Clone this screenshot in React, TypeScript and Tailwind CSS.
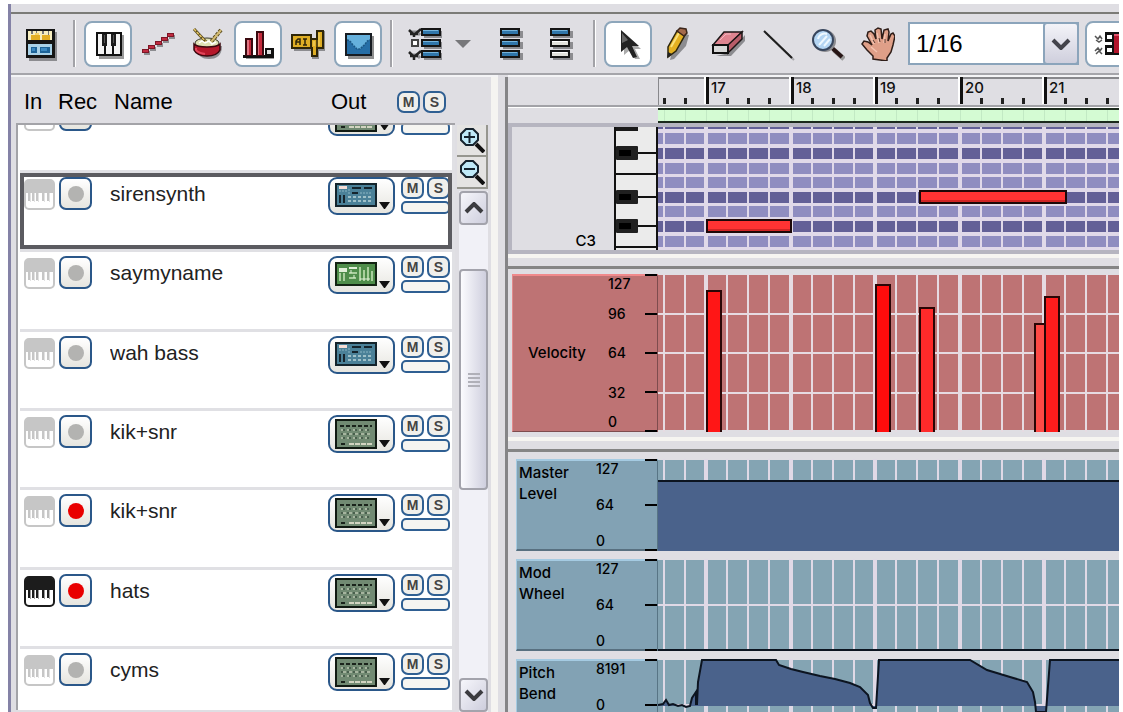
import { useEffect, useRef, useState } from 'react'
import type { ReactNode } from 'react'

type Device = 'synth' | 'sampler' | 'mixer'

interface Track {
  id: number
  name: string
  device: Device
  input?: boolean
  armed?: boolean
  scrolledOut?: boolean
}

interface Note {
  x: number
  y: number
  width: number
}

interface VelocityBar {
  x: number
  top: number
  width: number
  color: string
}

const tracks: Track[] = [
  { id: 0, name: '', device: 'mixer', scrolledOut: true },
  { id: 1, name: 'sirensynth', device: 'synth' },
  { id: 2, name: 'saymyname', device: 'sampler' },
  { id: 3, name: 'wah bass', device: 'synth' },
  { id: 4, name: 'kik+snr', device: 'mixer' },
  { id: 5, name: 'kik+snr', device: 'mixer', armed: true },
  { id: 6, name: 'hats', device: 'mixer', input: true, armed: true },
  { id: 7, name: 'cyms', device: 'mixer' },
]

const notes: Note[] = [
  { x: 49, y: 93, width: 84 },
  { x: 262, y: 64, width: 146 },
]

const velocities: VelocityBar[] = [
  { x: 49, top: 17, width: 14, color: '#ff1616' },
  { x: 218, top: 11, width: 14, color: '#ff0c0c' },
  { x: 262, top: 34, width: 14, color: '#ff2a2a' },
  { x: 377, top: 50, width: 11, color: '#ff4a46' },
  { x: 387, top: 23, width: 14, color: '#ff1c1c' },
]

// one entry per beat, every fourth one starts a bar
const BAR_WIDTH = 84.5
const FIRST_BAR = 17
const beats = Array.from({ length: 160 }, (_, i) => {
  const k = i - 2
  return { x: Math.round(48 + (k * BAR_WIDTH) / 4), bar: k % 4 === 0 ? FIRST_BAR + k / 4 : null }
})

const BeatLines = ({ color }: { color: string }) => (
  <>
    {beats.map((b) => (
      <rect key={b.x} x={b.bar ? b.x - 2 : b.x - 1} y="0" width={b.bar ? 4 : 2} height="100%" fill={color} />
    ))}
  </>
)

/* ---------- Toolbar icons ---------- */

const Icon = ({ children }: { children: ReactNode }) => (
  <svg className="h-[34px] w-[34px]" viewBox="0 0 34 34" fill="none" aria-hidden="true">
    {children}
  </svg>
)

const RackIcon = () => (
  <Icon>
    <path d="M5 5h28v29H5z" fill="#8c8c90" />
    <path d="M2 2h29v29H2z" fill="#151515" />
    <path d="M4 4h24v9H4z" fill="#f7eec0" />
    <path d="M7 4h2v3H7zM12 4h1v4h-1zM18 4h2v3h-2zM24 4h1v4h-1z" fill="#777" />
    <path d="M7 8h9v5H7zM18 8h8v5h-8z" fill="#e3ae25" />
    <path d="M11 6h4v2h-4z" fill="#f7d36a" />
    <path d="M4 17h24v11H4z" fill="#a9d2e8" />
    <path d="M7 20h6v6H7zM16 20h10v6H16z" fill="#1d6499" />
    <path d="M8 21h3v3H8zM17 21h6v3h-6z" fill="#3c8ac2" />
  </Icon>
)

const KeysIcon = () => (
  <Icon>
    <path d="M8 8h25v24H8z" fill="#9a9a9a" />
    <path d="M5 5h26v24H5z" fill="#111" />
    <path d="M7 7h6v20H7zM15 7h6v20h-6zM23 7h6v20h-6z" fill="#f4f4f4" />
    <path d="M11 7h5v12h-5zM20 7h5v12h-5z" fill="#1a1a1a" />
    <path d="M13 8h1v8h-1zM22 8h1v8h-1z" fill="#555" />
  </Icon>
)

const RexIcon = () => (
  <Icon>
    <path d="M3 24h6v4H3zM9 20h6v4H9zM16 16h6v4h-6zM22 12h6v4h-6zM28 8h6v4h-6z" fill="#8c8c90" />
    <path d="M1 22h7v4H1zM7 18h7v4H7zM14 14h7v4h-7zM20 10h7v4h-7zM26 6h7v4h-7z" fill="#7d1626" />
    <path d="M2 23h5v2H2zM8 19h5v2H8zM15 15h5v2h-5zM21 11h5v2h-5zM27 7h5v2h-5z" fill="#c02a40" />
  </Icon>
)

const DrumIcon = () => (
  <Icon>
    <path d="M6 20c0 9 5 12 12 12s13-3 13-13z" fill="#8c8c90" />
    <ellipse cx="16" cy="16" rx="12" ry="5" fill="#dfe0b4" stroke="#3a3a2a" strokeWidth="1" />
    <path d="M3 17v6c2 4 7 6 13 6s11-2 13-6v-6c-4 4-22 4-26 0z" fill="#b5172a" stroke="#3a080e" strokeWidth="1.5" />
    <path d="M5 21v2c2 3 5 3 9 4" stroke="#e0455a" strokeWidth="2" />
    <path d="M3 2l12 13" stroke="#54471b" strokeWidth="3" />
    <path d="M3 2l12 13" stroke="#e4c564" strokeWidth="1.5" strokeDasharray="3 1" />
    <path d="M30 3L20 15" stroke="#54471b" strokeWidth="4" strokeDasharray="3 1" />
    <path d="M30 3L20 15" stroke="#d2ba70" strokeWidth="2" />
    <path d="M8 16l3-2 3 2 4-2 3 3 4-2" stroke="#fff" strokeWidth="1.5" />
  </Icon>
)

const BarsIcon = () => (
  <Icon>
    <path d="M5 30h28v2H5z" fill="#999" />
    <path d="M2 28h31v3H2z" fill="#111" />
    <path d="M4 11h8v18H4zM15 4h8v25h-8z" fill="#3b0a10" />
    <path d="M6 13h4v15H6zM17 6h4v22h-4z" fill="#c42a3c" />
    <path d="M6 13h2v15H6zM17 6h1v22h-1z" fill="#e07482" />
    <path d="M24 21h9v8h-9z" fill="#111" />
    <path d="M26 23h4v4h-4z" fill="#ddd" />
  </Icon>
)

const AutomationIcon = () => (
  <Icon>
    <path d="M3 11h19v13H3zM29 4h5v20h-6v8h-7V14h8z" fill="#8c8c90" />
    <path d="M1 8h19v13H1z" fill="#dfae25" stroke="#2f2608" strokeWidth="2" />
    <path d="M20 12h6V4h6v17h-6v8h-5v-8h-1z" fill="#dfae25" stroke="#2f2608" strokeWidth="2" />
    <path d="M26 4v18" stroke="#2f2608" strokeWidth="1.500" />
    <path d="M5 18v-4l2-2h2v6M5 15h4M12 12h4M14 12v6M12 18h4" stroke="#2f2608" strokeWidth="1.500" />
    <path d="M28 6v13M23 14v5" stroke="#f7dc77" />
  </Icon>
)

const EnvelopeIcon = () => (
  <Icon>
    <path d="M7 9h26v23H7z" fill="#8f8f8f" />
    <path d="M4 6h27v23H4z" fill="#171c22" />
    <path d="M6 8h23v19H6z" fill="#266ea6" />
    <path d="M6 8h23v5c-4 0-4 5-7 6l-3 3h-3l-3-3c-2-1-3-6-7-6z" fill="#65b0dc" />
    <path d="M6 13c4 0 5 5 7 6l3 3h3l3-3c3-1 3-6 7-6" stroke="#1b5784" strokeWidth="1.500" strokeDasharray="2 1" />
  </Icon>
)

const SlotBar = ({ x, y, width, empty }: { x: number; y: number; width: number; empty?: boolean }) => (
  <g>
    <rect x={x + 3} y={y + 3} width={width} height="7" fill="#8c8c90" />
    <rect x={x + 1} y={y + 1} width={width - 2} height="6" fill={empty ? '#e2e2dc' : '#3076aa'} stroke="#151515" strokeWidth="2" />
    <rect x={x + 2} y={y + 2} width={width - 5} height="1" fill={empty ? '#fff' : '#75b4dc'} />
  </g>
)

const ControllerListIcon = () => (
  <Icon>
    <path d="M3 5h6l3 3M3 28h6l3 3" stroke="#8c8c90" strokeWidth="3" />
    <path d="M1 3l5 5 7-6M2 7h8M6 8v2M1 25l5 5 7-6M2 29h8M6 30v3" stroke="#222" strokeWidth="2.500" />
    <path d="M4 13h6v6H4z" fill="#fff" stroke="#444" strokeWidth="2" />
    <SlotBar x={13} y={1} width={20} />
    <SlotBar x={13} y={12} width={20} />
    <SlotBar x={13} y={23} width={20} />
  </Icon>
)

const SlotsIcon = ({ empty }: { empty?: boolean }) => (
  <Icon>
    <SlotBar x={6} y={1} width={20} />
    <SlotBar x={6} y={12} width={20} empty={empty} />
    <SlotBar x={6} y={23} width={20} empty={empty} />
  </Icon>
)

const PointerIcon = () => (
  <Icon>
    <path d="M13 6v22l6-5 5 9h5l-5-10h6z" fill="#aaa" />
    <path d="M10 3v22l6-5 6 11 4-1-5-11h7z" fill="#222" />
    <path d="M11 6v10l6-3z" fill="#666" />
  </Icon>
)

const PencilIcon = () => (
  <Icon>
    <path d="M9 33l3-12L22 6l6 2-3 11-12 13z" fill="#8c8c90" />
    <path d="M7 30V20l9-16 8 4-9 16z" fill="#e3b022" stroke="#2d260d" strokeWidth="1.500" />
    <path d="M10 20l8-14" stroke="#f9e079" strokeWidth="2" />
    <path d="M16 4l3-3 6 1 1 4-3 3z" fill="#a46a4c" stroke="#3c271b" strokeWidth="1.500" />
    <path d="M6 31l1-6 4 2z" fill="#222" />
  </Icon>
)

const EraserIcon = () => (
  <Icon>
    <path d="M5 29h15l14-15v-6L18 26z" fill="#8c8c90" />
    <path d="M2 18L13 5h18L18 18z" fill="#df8490" stroke="#1c1516" strokeWidth="1.500" />
    <path d="M17 18L31 5v7L17 26z" fill="#b85c69" stroke="#1c1516" strokeWidth="1.500" />
    <path d="M2 18h15v8H2z" fill="#d7d7d7" stroke="#111" strokeWidth="2" />
    <path d="M9 13l6-6h5" stroke="#f3bac1" />
  </Icon>
)

const LineIcon = () => (
  <Icon>
    <path d="M5 6l28 27" stroke="#a8a8ac" strokeWidth="2" />
    <path d="M3 4l28 27" stroke="#1e1e1e" strokeWidth="2" />
  </Icon>
)

const MagnifierIcon = () => (
  <Icon>
    <path d="M23 23l10 9" stroke="#999" strokeWidth="5" />
    <path d="M20 20l11 10" stroke="#271515" strokeWidth="4" />
    <circle cx="14" cy="14" r="11" fill="#8c8c90" />
    <circle cx="12" cy="13" r="10" fill="#b4d5f3" stroke="#38465d" strokeWidth="2" />
    <path d="M7 12c1-5 6-6 9-5M8 18l8-9M13 19l6-7" stroke="#eef8ff" strokeWidth="2" />
  </Icon>
)

const HandIcon = () => (
  <Icon>
    <path
      d="M12 32v-3L6 23l-5-6 2-3 4 1 4 3L6 9l1-4 3-1 3 3 2 5-1-9 3-2 3 1 1 10 2-9 4-1 1 3-1 9 3-7 2-1 2 3-2 9-2 7-4 6v3z"
      fill="#df9f88"
      stroke="#2e1d18"
      strokeWidth="1.500"
    />
    <path d="M9 8l4 9M16 6l2 10M24 7l-1 9M10 20l6 5" stroke="#f4c3b0" strokeWidth="1.500" />
    <path d="M14 16l-2-3M19 15l-1-4M24 16v-4" stroke="#593a30" />
  </Icon>
)

const SnapIcon = () => (
  <Icon>
    <path d="M3 9l3 3 2-3 2 3M3 24l3-3 2 3 2-3M4 13l3 2 3-2M4 27l3-3 3 3" stroke="#555" strokeWidth="1.500" />
    <path d="M14 6h20v21H14v-8h7v-5h-7z" fill="#b2152c" stroke="#111" strokeWidth="2" />
    <path d="M14 7h7v6h-7zM14 20h7v6h-7z" fill="#fff" stroke="#111" strokeWidth="2" />
    <path d="M22 8h12" stroke="#e0526a" strokeWidth="2" />
  </Icon>
)

const ToolButton = ({ label, active, children }: { label: string; active?: boolean; children: ReactNode }) => (
  <button
    aria-label={label}
    className={`flex h-[46px] w-12 shrink-0 items-center justify-center rounded-lg border-2 ${
      active ? 'border-[#8da6bb] bg-white' : 'border-transparent'
    }`}
  >
    {children}
  </button>
)

const Separator = () => <div className="mx-2 h-[47px] w-[3px] shrink-0 border-r border-white bg-[#a2a2a7]" />

const Toolbar = () => {
  const [snap, setSnap] = useState('1/16')

  return (
    <div className="flex h-[61px] shrink-0 items-center overflow-hidden border-b-2 border-[#a5a5aa] pl-[6px]">
      <ToolButton label="Rack"><RackIcon /></ToolButton>
      <Separator />
      <div className="flex gap-[2px]">
        <ToolButton label="Key lane" active><KeysIcon /></ToolButton>
        <ToolButton label="REX lane"><RexIcon /></ToolButton>
        <ToolButton label="Drum lane"><DrumIcon /></ToolButton>
        <ToolButton label="Velocity lane" active><BarsIcon /></ToolButton>
        <ToolButton label="Pattern lane"><AutomationIcon /></ToolButton>
        <ToolButton label="Controller lane" active><EnvelopeIcon /></ToolButton>
      </div>
      <Separator />
      <ToolButton label="Controllers"><ControllerListIcon /></ToolButton>
      <button aria-label="Choose controllers" className="flex w-8 shrink-0 justify-center pr-1">
        <svg className="h-2 w-4" viewBox="0 0 16 8" aria-hidden="true">
          <path d="M0 0h16L8 8z" fill="#77777a" />
        </svg>
      </button>
      <div className="ml-[6px] flex gap-[2px]">
        <ToolButton label="Show controllers in clip"><SlotsIcon /></ToolButton>
        <ToolButton label="Show first controller"><SlotsIcon empty /></ToolButton>
      </div>
      <Separator />
      <div className="flex gap-[2px]">
        <ToolButton label="Selection tool" active><PointerIcon /></ToolButton>
        <ToolButton label="Pencil tool"><PencilIcon /></ToolButton>
        <ToolButton label="Eraser tool"><EraserIcon /></ToolButton>
        <ToolButton label="Line tool"><LineIcon /></ToolButton>
        <ToolButton label="Magnifier tool"><MagnifierIcon /></ToolButton>
        <ToolButton label="Hand tool"><HandIcon /></ToolButton>
      </div>
      <div className="relative mx-[6px] w-[171px] shrink-0">
        <select
          aria-label="Snap value"
          value={snap}
          onChange={(e) => setSnap(e.target.value)}
          className="h-[43px] w-full appearance-none border-2 border-[#8ba4bb] bg-white pl-[6px] text-2xl text-black"
        >
          <option>Bar</option>
          <option>1/4</option>
          <option>1/8</option>
          <option>1/16</option>
        </select>
        <div className="pointer-events-none absolute inset-y-0 right-0 flex w-9 items-center justify-center rounded border-2 border-[#8ba4bb] bg-linear-to-b from-[#f3f3f8] to-[#cfcfdd]">
          <svg className="h-3 w-5" viewBox="0 0 20 12" aria-hidden="true">
            <path d="M2 2l8 8 8-8" fill="none" stroke="#44444c" strokeWidth="4" />
          </svg>
        </div>
      </div>
      <ToolButton label="Snap to grid" active><SnapIcon /></ToolButton>
    </div>
  )
}

/* ---------- Track list ---------- */

const MuteSolo = () => (
  <div className="flex gap-[3px]">
    <button className="flex h-[22px] w-[23px] items-center justify-center rounded-[7px] border-2 border-[#2f5f92] bg-[#f0efeb] text-[14px] leading-[18px] font-bold text-[#444]">
      M
    </button>
    <button className="flex h-[22px] w-[23px] items-center justify-center rounded-[7px] border-2 border-[#2f5f92] bg-[#f0efeb] text-[14px] leading-[18px] font-bold text-[#444]">
      S
    </button>
  </div>
)

const InputIcon = ({ on }: { on?: boolean }) => {
  const dark = on ? '#1c1c1c' : '#c6c6c6'
  const shade = on ? '#999' : '#e2e2e2'
  return (
    <svg className="h-[31px] w-[31px]" viewBox="0 0 31 31" aria-hidden="true">
      <rect x="1" y="1" width="29" height="29" rx="4" fill="#fff" stroke={dark} strokeWidth="2" />
      <path d="M1 4l3-3h23l3 3v10H1z" fill={dark} />
      <path d="M4 14h2v8H4zM8 14h2v8H8zM12 14h2v8h-2zM18 14h2v8h-2zM23 14h2v8h-2z" fill={dark} />
      <path d="M6 14h1v9H6zM10 14h1v9h-1zM14 14h1v9h-1zM20 14h1v9h-1zM25 14h1v9h-1z" fill={shade} />
    </svg>
  )
}

const DeviceScreen = ({ device }: { device: Device }) => {
  if (device === 'synth') {
    return (
      <svg className="mt-[2px] h-6 w-[42px]" viewBox="0 0 42 24" aria-hidden="true">
        <rect x="1" y="1" width="40" height="22" fill="#4b8198" stroke="#14242c" strokeWidth="2" />
        <path d="M4 3h8v3H4z" fill="#f4ddd6" />
        <path d="M17 4h9v2h-9zM29 4h8v2h-8zM17 9h6v2h-6z" fill="#15242c" />
        <path d="M4 8h9M14 6v5M25 10h12" stroke="#8bb5c3" strokeWidth="1" strokeDasharray="2 1" />
        <path d="M5 12v8M9 12v8" stroke="#17242c" strokeWidth="2" />
        <path d="M13 14h25M13 18h25" stroke="#9fc0c8" strokeWidth="2" strokeDasharray="3 2" />
      </svg>
    )
  }
  if (device === 'sampler') {
    return (
      <svg className="mt-[2px] h-6 w-[42px]" viewBox="0 0 42 24" aria-hidden="true">
        <rect x="1" y="1" width="40" height="22" fill="#4e8d4a" stroke="#132413" strokeWidth="2" />
        <path d="M4 6h8v4H4zM14 5h8v2h-8z" fill="#e0efd8" />
        <path d="M5 11v8M9 11v8M14 11h8M14 16h7M25 5v14M29 8v11M33 5v14M37 9v10" stroke="#a9cf9d" strokeWidth="2" />
        <path d="M16 8v3M19 13v3M25 17h10" stroke="#e0efd8" />
      </svg>
    )
  }
  return (
    <svg className="h-[30px] w-[42px]" viewBox="0 0 42 30" aria-hidden="true">
      <rect x="1" y="1" width="40" height="28" fill="#718a72" stroke="#111a12" strokeWidth="2" />
      <path d="M5 7h32" stroke="#1a231b" strokeWidth="2" strokeDasharray="4 2" />
      <path d="M6 11h30M8 15h30M6 19h30" stroke="#a6b59f" strokeWidth="2" strokeDasharray="3 3" />
      <path d="M8 11h30M6 15h30M8 19h30" stroke="#495f4d" strokeWidth="2" strokeDasharray="2 4" />
      <path d="M6 25h4" stroke="#1a231b" strokeWidth="2" />
      <path d="M14 25h23" stroke="#d2d4c1" strokeWidth="2" strokeDasharray="5 1" />
    </svg>
  )
}

const TrackRow = ({ track, selected, onSelect }: { track: Track; selected: boolean; onSelect: () => void }) => (
  <li
    onClick={onSelect}
    className="relative flex h-[79px] shrink-0 items-start border-r-[3px] border-b-[3px] border-[#e0e0e4] bg-white pt-1 pr-[2px] pl-1 nth-[3n]:h-20"
  >
    <button aria-label="Input" className="mt-[2px]">
      <InputIcon on={track.input} />
    </button>
    <button
      aria-label="Record"
      className="ml-1 flex h-[33px] w-[33px] items-center justify-center rounded-[7px] border-2 border-[#2a5789] bg-linear-to-b from-white to-[#e6e5df]"
    >
      <span className={`h-4 w-4 rounded-full ${track.armed ? 'bg-[#e90000]' : 'bg-[#b3b3b1]'}`} />
    </button>
    <span className="ml-[18px] flex-1 truncate text-[21px] leading-[34px] text-[#222]">{track.name}</span>
    <button
      aria-label="Output device"
      className="mr-[6px] flex h-[38px] w-[67px] items-end rounded-[9px] border-2 border-[#2a5789] bg-linear-to-b from-white to-[#e6e5df] pl-[5px]"
    >
      <span className="flex h-full items-start pt-[2px]">
        <DeviceScreen device={track.device} />
      </span>
      <svg className="mb-1 ml-[2px] h-[7px] w-[11px]" viewBox="0 0 11 7" aria-hidden="true">
        <path d="M0 0h11L6 7H5z" fill="#111" />
      </svg>
    </button>
    <div className="flex w-[49px] flex-col gap-[2px]">
      {track.scrolledOut ? <div className="h-[22px]" /> : <MuteSolo />}
      <div className="h-[13px] rounded-[5px] border-2 border-[#2f5f92] bg-[#f6f5f1]" />
    </div>
    {selected && <div className="pointer-events-none absolute inset-0 border-4 border-[#5b5b60]" />}
  </li>
)

const ZoomButton = ({ label, plus }: { label: string; plus?: boolean }) => (
  <button
    aria-label={label}
    className="h-8 w-[31px] shrink-0 border-r-2 border-b-2 border-[#96968f] bg-[#e4e3e2] pl-[2px]"
  >
    <svg className="h-[26px] w-[26px]" viewBox="0 0 26 26" aria-hidden="true">
      <path d="M17 17l8 8" stroke="#111" strokeWidth="4" />
      <path d="M7 2h7l5 5v6l-5 5H7l-5-5V7z" fill="#bfe9f8" stroke="#16232e" strokeWidth="2" />
      <path d={plus ? 'M5 10h11M10.500 5v11' : 'M5 10h11'} stroke="#16232e" strokeWidth="2" />
    </svg>
  </button>
)

const ScrollArrow = ({ label, down }: { label: string; down?: boolean }) => (
  <button
    aria-label={label}
    className="flex h-[34px] w-full shrink-0 items-center justify-center rounded border-2 border-[#a3a3ac] bg-linear-to-br from-[#f6f6fb] to-[#cecedd]"
  >
    <svg className="h-3 w-5" viewBox="0 0 20 12" aria-hidden="true">
      <path d={down ? 'M2 2l8 8 8-8' : 'M2 10l8-8 8 8'} fill="none" stroke="#3c3c40" strokeWidth="4" />
    </svg>
  </button>
)

const TrackList = () => {
  const [selected, setSelected] = useState(1)

  return (
    <section className="flex w-[487px] shrink-0 flex-col border-r-[7px] border-[#f5f4f1]">
      <header className="flex h-[46px] shrink-0 items-center pt-[3px] pl-[13px] text-[22px] text-black">
        <span className="w-[34px]">In</span>
        <span className="w-14">Rec</span>
        <span className="w-[217px]">Name</span>
        <span className="w-[66px]">Out</span>
        <MuteSolo />
      </header>
      <div className="flex min-h-0 flex-1 pl-[5px]">
        <div className="mb-[2px] min-w-0 flex-1 overflow-hidden border-t-2 border-l-2 border-[#a3a3a8] bg-white pl-[2px]">
          <ul className="-mt-[31px] flex flex-col">
            {tracks.map((t) => (
              <TrackRow key={t.id} track={t} selected={selected === t.id} onSelect={() => setSelected(t.id)} />
            ))}
          </ul>
        </div>
        <div className="ml-[2px] flex w-[34px] shrink-0 flex-col pt-[2px] pr-[3px]">
          <ZoomButton label="Zoom in" plus />
          <ZoomButton label="Zoom out" />
          <div className="mt-[2px] ml-[2px] flex min-h-0 flex-1 flex-col bg-[#f1f1f7]">
            <ScrollArrow label="Scroll up" />
            <div className="mt-[44px] flex h-[221px] flex-col items-center justify-center gap-[2px] rounded border-2 border-[#a3a3ac] bg-linear-to-r from-[#fbfbfe] to-[#cfcfde]">
              <div className="h-[2px] w-3 bg-[#b0b0b8]" />
              <div className="h-[2px] w-3 bg-[#b0b0b8]" />
              <div className="h-[2px] w-3 bg-[#b0b0b8]" />
              <div className="h-[2px] w-3 bg-[#b0b0b8]" />
            </div>
            <div className="flex-1" />
            <ScrollArrow label="Scroll down" down />
          </div>
        </div>
      </div>
    </section>
  )
}

/* ---------- Editor lanes ---------- */

const Ruler = () => {
  const rulerRef = useRef<SVGSVGElement>(null)
  const [width, setWidth] = useState(0)

  useEffect(() => {
    if (!rulerRef.current) return
    const observer = new ResizeObserver(([entry]) => setWidth(entry.contentRect.width))
    observer.observe(rulerRef.current)
    return () => observer.disconnect()
  }, [])

  return (
    <div className="flex h-8 shrink-0 border-t-2 border-b-2 border-t-[#f4f4f6] border-b-[#a2a2a7]">
      <div className="w-[150px] shrink-0" />
      <svg ref={rulerRef} className="h-7 min-w-0 flex-1" aria-hidden="true">
        <path d="M0 28V1h4000" fill="none" stroke="#88888c" strokeWidth="2" />
        {beats
          .filter((b) => b.x < width)
          .map((b) =>
            b.bar ? (
              <g key={b.x}>
                <rect x={b.x - 2} y="0" width="2" height="27" fill="#fff" />
                <rect x={b.x} y="0" width="3" height="27" fill="#111" />
                {b.x + 24 < width && (
                  <text x={b.x + 5} y="16" className="font-[Inter,sans-serif] text-[15px] font-medium" fill="#111">
                    {b.bar}
                  </text>
                )}
              </g>
            ) : (
              <rect key={b.x} x={b.x - 1} y="21" width="3" height="6" fill="#222" />
            ),
          )}
      </svg>
    </div>
  )
}

const LoopBar = () => (
  <div className="flex h-4 shrink-0">
    <div className="w-[150px] shrink-0 border-t border-white" />
    <svg className="h-4 min-w-0 flex-1" aria-hidden="true">
      <rect width="100%" height="16" fill="#1b2a1c" />
      <rect width="100%" height="1" fill="#fff" />
      <rect y="3" width="100%" height="11" fill="#d4fbd3" />
      {beats.map((b) => (
        <rect key={b.x} x={b.x} y="3" width="1" height="11" fill="#c2e9c4" />
      ))}
    </svg>
  </div>
)

const rollRows = [-9, 6, 21, 36, 50, 65, 79, 94, 109]
const darkRows = [-9, 21, 65, 94]

const KeyLane = () => (
  <div className="flex h-[131px] shrink-0 border-y-[4px] border-l-[4px] border-[#b6b5c0]">
    <div className="flex w-[102px] shrink-0 items-end justify-end pr-[18px] font-[Inter,sans-serif] text-[15px] leading-[18px] font-medium text-black">
      C3
    </div>
    <svg className="h-[123px] w-11 shrink-0" viewBox="0 0 44 123" aria-hidden="true">
      <rect width="44" height="123" fill="#ebebeb" />
      <path d="M1 0v123M43 0v123" stroke="#111" strokeWidth="2" />
      <path d="M0 47h44M0 120h44M22 26h22M22 70h22M22 99h22" stroke="#111" strokeWidth="2" />
      <rect x="2" y="0" width="22" height="4" fill="#1a1a1a" />
      {[19, 63, 92].map((y) => (
        <g key={y}>
          <rect x="2" y={y} width="22" height="14" rx="1" fill="#202020" />
          <rect x="5" y={y + 4} width="12" height="6" fill="#000" />
        </g>
      ))}
    </svg>
    <svg className="h-[123px] min-w-0 flex-1" aria-label="Notes">
      <rect width="100%" height="123" fill="#e0d9e9" />
      {rollRows.map((y) => (
        <rect key={y} y={y} width="100%" height="11" fill={darkRows.includes(y) ? '#636097' : '#8f8dc0'} />
      ))}
      <BeatLines color="#e0d9e9" />
      {notes.map((n) => (
        <g key={n.x}>
          <rect x={n.x} y={n.y} width={n.width} height="12" fill="#ff3333" stroke="#1c0808" strokeWidth="2" />
          <rect x={n.x + 1} y={n.y + 9} width={n.width - 2} height="2" fill="#cf2424" />
        </g>
      ))}
    </svg>
  </div>
)

const Splitter = () => (
  <div className="h-[15px] shrink-0 border-t-4 border-b-[3px] border-t-[#f6f5f1] border-b-[#858585]" />
)

const Ticks = ({ count }: { count: number }) => (
  <div className="flex w-3 flex-col justify-between">
    {Array.from({ length: count }, (_, i) => (
      <div key={i} className="h-[2px] bg-black" />
    ))}
  </div>
)

const VelocityLane = () => (
  <div className="flex h-[168px] shrink-0 py-[5px]">
    <div className="ml-1 flex h-[158px] w-[146px] shrink-0 border-t-2 border-r border-b border-l border-t-[#f08a8c] border-r-[#7e4c4e] border-b-[#7e4c4e] border-l-[#e28a8c] bg-[#be7374] font-[Inter,sans-serif] font-medium text-black">
      <span className="flex w-[95px] items-center pl-[15px] text-[15px]">Velocity</span>
      <div className="grid flex-1 grid-rows-[30px_39px_40px_29px_17px] text-[14px] leading-4">
        <span>127</span>
        <span>96</span>
        <span>64</span>
        <span>32</span>
        <span>0</span>
      </div>
      <div className="-mt-[2px] -mb-px flex">
        <Ticks count={5} />
      </div>
    </div>
    <svg className="h-[158px] min-w-0 flex-1" aria-label="Velocity">
      <rect y="1" width="100%" height="155" fill="#be7374" />
      <path d="M0 40h4000M0 79h4000M0 119h4000" stroke="#e6dbe2" strokeWidth="2" />
      <BeatLines color="#e6dbe2" />
      {velocities.map((v) => (
        <path
          key={v.x}
          d={`M${v.x} 158V${v.top}h${v.width}V158`}
          fill={v.color}
          stroke="#2a0505"
          strokeWidth="2"
        />
      ))}
    </svg>
  </div>
)

const ControllerLane = ({ name, scale, children }: { name: string; scale: string[]; children: ReactNode }) => (
  <div className="flex h-[92px] shrink-0">
    <div className="ml-2 flex w-[142px] shrink-0 border-t-2 border-r border-b-2 border-l border-t-[#a5cbe2] border-r-[#587585] border-b-[#587080] border-l-[#a5cbe2] bg-[#82a2b4] font-[Inter,sans-serif] font-medium text-black">
      <span className="w-[79px] pt-px pr-4 pl-[2px] text-[15px] leading-[21px]">{name}</span>
      <div className="grid flex-1 auto-rows-[36px] text-[14px] leading-4">
        {scale.map((s) => (
          <span key={s} className="last:h-4">{s}</span>
        ))}
      </div>
      <div className="-mt-[2px] -mb-[2px] flex">
        <Ticks count={3} />
      </div>
    </div>
    <svg className="h-[92px] min-w-0 flex-1" aria-label={name}>
      <rect y="1" width="100%" height="90" fill="#84a4b3" />
      <rect y="45" width="100%" height="2" fill="#e0d9e6" />
      <BeatLines color="#e0d9e6" />
      {children}
    </svg>
  </div>
)

const bendCurve =
  'M0 46l5-1 3-4 3 5 4-1 5 2 4-1 4 2 4-1 2-8 4-6 1 12 1-22 4-22h74l3 5 12 4 12 3 17 4 15 3 15 4 10 4 8 8 2 8 3 5h3l3-48h91l17 10 23 7 17 5 6 10 2 10 1 10h10l4-52H4000'

const Controllers = () => (
  <div className="flex min-h-0 flex-1 flex-col gap-2 overflow-hidden pt-[7px]">
    <ControllerLane name="Master Level" scale={['127', '64', '0']}>
      <rect y="22" width="100%" height="70" fill="#4a628b" />
      <rect y="21" width="100%" height="2" fill="#0c1420" />
    </ControllerLane>
    <ControllerLane name="Mod Wheel" scale={['127', '64', '0']}>
      <rect y="90" width="100%" height="2" fill="#0c1420" />
    </ControllerLane>
    <ControllerLane name="Pitch Bend" scale={['8191', '0']}>
      <path d={`${bendCurve}V47H0z`} fill="#4a628b" />
      <path d={bendCurve} fill="none" stroke="#0c1420" strokeWidth="2" />
      <path d="M37 46V34l3-6v18z" fill="#0c1420" />
    </ControllerLane>
  </div>
)

const App = () => (
  <div className="h-screen overflow-hidden bg-white pt-1 pr-1 pl-2 font-['Liberation_Sans',Arial,sans-serif]">
    <main className="flex h-full flex-col overflow-hidden border-l-[3px] border-[#8482a6] bg-[#dfdee3]">
      <div className="h-[10px] shrink-0 border-b-2 border-[#7b7b77]" />
      <Toolbar />
      <div className="flex min-h-0 flex-1">
        <div className="flex shrink-0 border-t-2 border-[#f4f4f6]">
          <TrackList />
        </div>
        <div className="mt-[2px] w-[10px] shrink-0 border-r-[3px] border-[#858587]" />
        <section className="flex min-w-0 flex-1 flex-col">
          <Ruler />
          <LoopBar />
          <KeyLane />
          <Splitter />
          <VelocityLane />
          <Splitter />
          <Controllers />
        </section>
      </div>
    </main>
  </div>
)

export default App
